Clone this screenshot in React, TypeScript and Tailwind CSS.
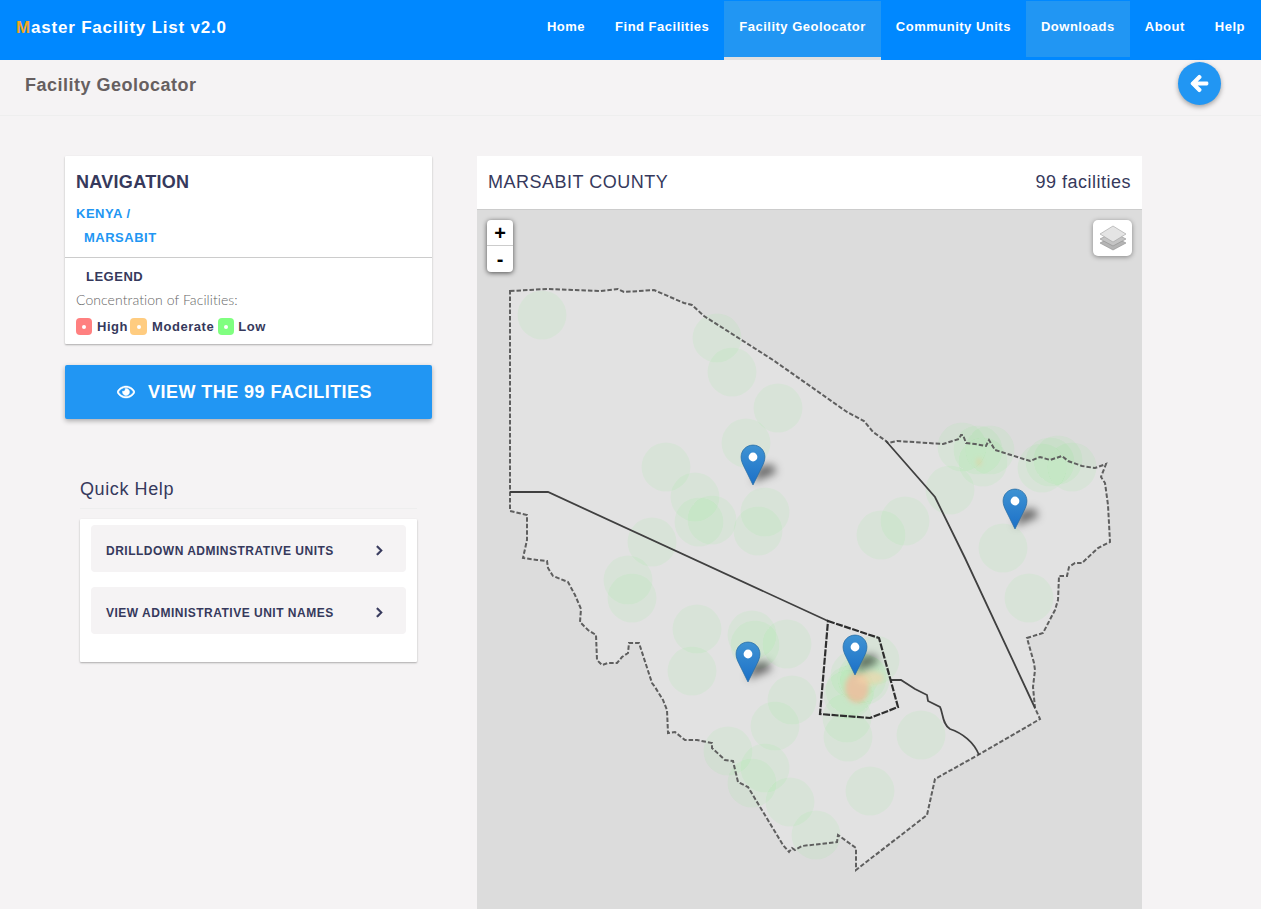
import { FaArrowLeft, FaChevronRight, FaRegEye } from "react-icons/fa";

const navItems = [
  { label: "Home" },
  { label: "Find Facilities" },
  { label: "Facility Geolocator", active: true },
  { label: "Community Units" },
  { label: "Downloads", hover: true },
  { label: "About" },
  { label: "Help" },
];

const county =
  "510,291 547,289 600,291 618,289 624,292 654,290 684,303 692,305 704,316 773,360 847,412 864,421 873,432 886,441 888,443 897,441 943,444 959,439 961,435 963,435 966,443 975,444 986,446 989,440 995,450 1030,461 1040,457 1050,460 1062,456 1068,461 1082,466 1095,468 1106,464 1101,477 1105,483 1108,505 1110,542 1098,548 1082,563 1075,563 1069,567 1067,576 1059,576 1058,600 1055,610 1043,633 1027,638 1034,663 1035,670 1033,687 1035,708 1040,719 978,755 935,779 927,815 856,870 856,848 838,835 837,842 802,846 795,850 792,848 789,852 783,845 748,787 738,782 733,761 725,760 712,748 712,743 697,740 685,740 675,732 668,733 667,710 663,700 655,687 652,683 639,643 629,643 628,653 622,657 617,663 608,663 602,665 597,660 596,635 588,630 580,622 581,609 575,595 568,582 553,576 548,568 547,561 537,560 523,558 527,540 527,515 510,511 510,492";

const circles = [
  [542, 315], [717, 338], [732, 372], [778, 408], [746, 443], [666, 467], [695, 497], [699, 522],
  [712, 520], [765, 512], [758, 531], [881, 535], [905, 521], [950, 490], [962, 447], [978, 450],
  [990, 450], [983, 462], [1042, 468], [1050, 462], [1058, 460], [1072, 467], [1003, 548],
  [1029, 598], [652, 542], [628, 580], [632, 598], [697, 629], [692, 671], [752, 635], [755, 645],
  [787, 644], [792, 700], [775, 726], [728, 751], [765, 768], [752, 783], [790, 802], [816, 835],
  [870, 791], [921, 735], [848, 737], [847, 718], [875, 660], [862, 678], [855, 675], [850, 690],
  [865, 680], [848, 695],
];

const markers = [
  [753, 485],
  [1015, 529],
  [748, 682],
  [855, 675],
];

function MapLayer() {
  return (
    <svg viewBox="477 210 665 699" className="block w-full h-[699px]">
      <defs>
        <linearGradient id="pin" x1="0" y1="0" x2="0" y2="1">
          <stop offset="0" stopColor="#3f93d3" />
          <stop offset="1" stopColor="#1b70c8" />
        </linearGradient>
        <filter id="soft" x="-50%" y="-50%" width="200%" height="200%">
          <feGaussianBlur stdDeviation="2.5" />
        </filter>
        <filter id="shade" x="-80%" y="-80%" width="260%" height="260%">
          <feGaussianBlur stdDeviation="4" />
        </filter>
        <filter id="edge" x="-10%" y="-10%" width="120%" height="120%">
          <feGaussianBlur stdDeviation="0.5" />
        </filter>
        <filter id="lines" x="-10%" y="-10%" width="120%" height="120%">
          <feGaussianBlur stdDeviation="0.3" />
        </filter>
      </defs>
      <polygon points={county} fill="#e2e2e2" />
      <g filter="url(#edge)">
        {circles.map(([cx, cy], i) => (
          <circle key={i} cx={cx} cy={cy} r={24.5} fill="#30ff30" fillOpacity={0.045} />
        ))}
      </g>
      <g filter="url(#soft)">
        <ellipse cx={857} cy={688} rx={12} ry={15} fill="#f4b89a" fillOpacity={0.75} />
        <ellipse cx={870} cy={678} rx={14} ry={7} fill="#f4d4a8" fillOpacity={0.6} />
        <ellipse cx={979} cy={462} rx={2} ry={4} fill="#f0c890" fillOpacity={0.6} />
      </g>
      <g filter="url(#lines)" fill="none">
        <polygon points={county} stroke="#5e5e5e" strokeWidth={2} strokeDasharray="4.5 2" />
        <polyline points="510,492 548,492 828,621" stroke="#404040" strokeWidth={1.8} />
        <polyline points="886,441 935,497 965,558 1035,708" stroke="#404040" strokeWidth={1.8} />
        <path
          d="M890 680 L901 680 L915 689 L927 695 L928 701 L940 707 C943 712 942 724 950 729 C962 733 974 742 979 755"
          stroke="#404040"
          strokeWidth={1.8}
        />
        <polygon points="828,621 879,638 898,707 870,718 820,714" stroke="#2e2e2e" strokeWidth={2.2} strokeDasharray="7 1.5" />
      </g>
      {markers.map(([x, y], i) => (
        <g key={i} transform={`translate(${x - 12.5} ${y - 40.5})`}>
          <path d="M12 38 L18 22 L32 20 L36 28 Z" fill="#000000" fillOpacity={0.55} filter="url(#shade)" />
          <path
            d="M12.5 .6C5.9 .6 .6 5.9 .6 12.4c0 3.4 1.2 6.2 2.7 9.4l9.2 18.6 9.2-18.6c1.5-3.2 2.7-6 2.7-9.4C24.4 5.9 19.1 .6 12.5 .6z"
            fill="url(#pin)"
            stroke="#2a6ea6"
            strokeWidth={0.8}
          />
          <circle cx={12.5} cy={12.5} r={4.4} fill="#ffffff" />
        </g>
      ))}
    </svg>
  );
}

function LayersIcon() {
  return (
    <svg width="28" height="26" viewBox="0 0 28 26">
      <path d="M14 11 L27 18 L14 25 L1 18 Z" fill="#b4b4b4" stroke="#8f8f8f" strokeWidth="0.6" />
      <path d="M14 7 L27 14 L14 21 L1 14 Z" fill="#c4c4c4" stroke="#8f8f8f" strokeWidth="0.6" />
      <path d="M14 1 L27 9 L14 17 L1 9 Z" fill="#e4e4e4" stroke="#a0a0a0" strokeWidth="0.6" />
    </svg>
  );
}

export default function App() {
  return (
    <div className="h-screen overflow-hidden bg-[#f5f3f4] font-['Liberation_Sans',Arial,sans-serif] text-[#36395c]">
      <nav className="flex h-[60px] items-stretch justify-between bg-[#0088ff] pl-4 pr-px text-white">
        <a className="flex items-center pb-[5px] text-[17px] font-bold tracking-[0.8px]">
          <span className="text-[#f5a623]">M</span>aster Facility List v2.0
        </a>
        <ul className="flex items-start pt-px">
          {navItems.map((item) => {
            if (item.active) {
              return (
                <li
                  key={item.label}
                  className="flex h-[59px] items-center border-b-[3px] border-[#e0e0e0] bg-[#2196f3] px-[15px] pb-1 text-[13px] font-bold tracking-[0.5px]"
                >
                  {item.label}
                </li>
              );
            }
            return (
              <li
                key={item.label}
                className={
                  "flex h-[56px] items-center px-[15px] pb-1 text-[13px] font-bold tracking-[0.5px] " +
                  (item.hover ? "bg-[#2196f3]" : "")
                }
              >
                {item.label}
              </li>
            );
          })}
        </ul>
      </nav>

      <div className="flex h-[56px] items-center justify-between border-b border-[#eeeeee] pl-[25px] pr-10">
        <h1 className="mt-[-4px] text-[18px] font-bold tracking-[0.5px] text-[#665f60]">Facility Geolocator</h1>
        <button className="mt-[-8px] flex h-[43px] w-[43px] items-center justify-center rounded-full bg-[#2196f3] text-white shadow-[0_2px_5px_rgba(0,0,0,0.35)]">
          <FaArrowLeft size={19} stroke="currentColor" strokeWidth={30} />
        </button>
      </div>

      <main className="flex gap-[45px] pl-[65px] pt-10">
        <aside className="w-[367px]">
          <section className="h-[188px] rounded-[1px] bg-white shadow-[0_1px_2px_rgba(0,0,0,0.3)]">
            <div className="h-[102px] border-b border-[#cccccc] px-[11px] pt-[15px]">
              <h2 className="text-[18px] leading-[22px] font-bold tracking-[0.3px]">NAVIGATION</h2>
              <p className="mt-[13px] text-[13px] leading-[16px] font-bold tracking-[0.5px] text-[#2196f3]">KENYA /</p>
              <p className="mt-2 pl-2 text-[13px] leading-[16px] font-bold tracking-[0.5px] text-[#2196f3]">MARSABIT</p>
            </div>
            <div className="px-[11px] pt-[11px]">
              <h3 className="pl-[10px] text-[13px] leading-[16px] font-bold tracking-[0.5px]">LEGEND</h3>
              <p className="mt-[7px] font-['Lato',sans-serif] text-[14px] leading-[16px] font-light tracking-[0.07px] text-[#666666]">
                Concentration of Facilities:
              </p>
              <div className="mt-[9px] flex items-center text-[13px] font-bold tracking-[0.55px]">
                <span className="flex h-[17px] w-4 items-center justify-center rounded-sm bg-[#ff8080]">
                  <span className="h-1 w-1 rounded-full bg-white" />
                </span>
                <span className="ml-[5px]">High</span>
                <span className="ml-[2px] flex h-[17px] w-[17px] items-center justify-center rounded-sm bg-[#ffcc80]">
                  <span className="h-1 w-1 rounded-full bg-white" />
                </span>
                <span className="ml-[5px]">Moderate</span>
                <span className="ml-1 flex h-[17px] w-4 items-center justify-center rounded-sm bg-[#80ff80]">
                  <span className="h-1 w-1 rounded-full bg-white" />
                </span>
                <span className="ml-1">Low</span>
              </div>
            </div>
          </section>

          <button className="mt-[21px] flex h-[54px] w-full items-center justify-center gap-[13px] rounded-[2px] bg-[#2196f3] pr-2 text-[18px] font-bold tracking-[0.45px] text-white shadow-[0_2px_5px_rgba(0,0,0,0.3)]">
            <FaRegEye size={18} stroke="currentColor" strokeWidth={15} />
            VIEW THE 99 FACILITIES
          </button>

          <div className="mx-[15px] mt-[60px]">
            <h4 className="border-b border-[#eeeeee] pb-[8px] text-[18px] leading-[21px] tracking-[0.6px]">Quick Help</h4>
            <div className="mt-[10px] h-[143px] rounded-[1px] bg-white px-[11px] pt-[6px] shadow-[0_1px_2px_rgba(0,0,0,0.3)]">
              <div className="flex h-[47px] items-center justify-between rounded-sm bg-[#f5f3f4] pl-[15px] pr-[21px] pt-1 text-[12px] font-bold tracking-[0.5px]">
                DRILLDOWN ADMINSTRATIVE UNITS
                <FaChevronRight size={11} stroke="currentColor" strokeWidth={25} />
              </div>
              <div className="mt-[15px] flex h-[47px] items-center justify-between rounded-sm bg-[#f5f3f4] pl-[15px] pr-[21px] pt-1 text-[12px] font-bold tracking-[0.5px]">
                VIEW ADMINISTRATIVE UNIT NAMES
                <FaChevronRight size={11} stroke="currentColor" strokeWidth={25} />
              </div>
            </div>
          </div>
        </aside>

        <section className="w-[665px]">
          <header className="flex h-[54px] items-center justify-between border-b border-[#cccccc] bg-white px-[11px] text-[18px] tracking-[0.5px]">
            <span>MARSABIT COUNTY</span>
            <span>99 facilities</span>
          </header>
          <div className="relative bg-[#dcdcdc]">
            <MapLayer />
            <div className="absolute left-[10px] top-[10px] w-[26px] overflow-hidden rounded bg-white text-center text-[20px] leading-[27px] font-bold text-black shadow-[0_1px_5px_rgba(0,0,0,0.65)]">
              <div className="h-[26px] border-b border-[#cccccc]">+</div>
              <div className="h-[26px]">-</div>
            </div>
            <div className="absolute right-[10px] top-[10px] flex h-9 w-[39px] items-center justify-center rounded-[5px] bg-white shadow-[0_1px_5px_rgba(0,0,0,0.4)]">
              <LayersIcon />
            </div>
          </div>
        </section>
      </main>
    </div>
  );
}
